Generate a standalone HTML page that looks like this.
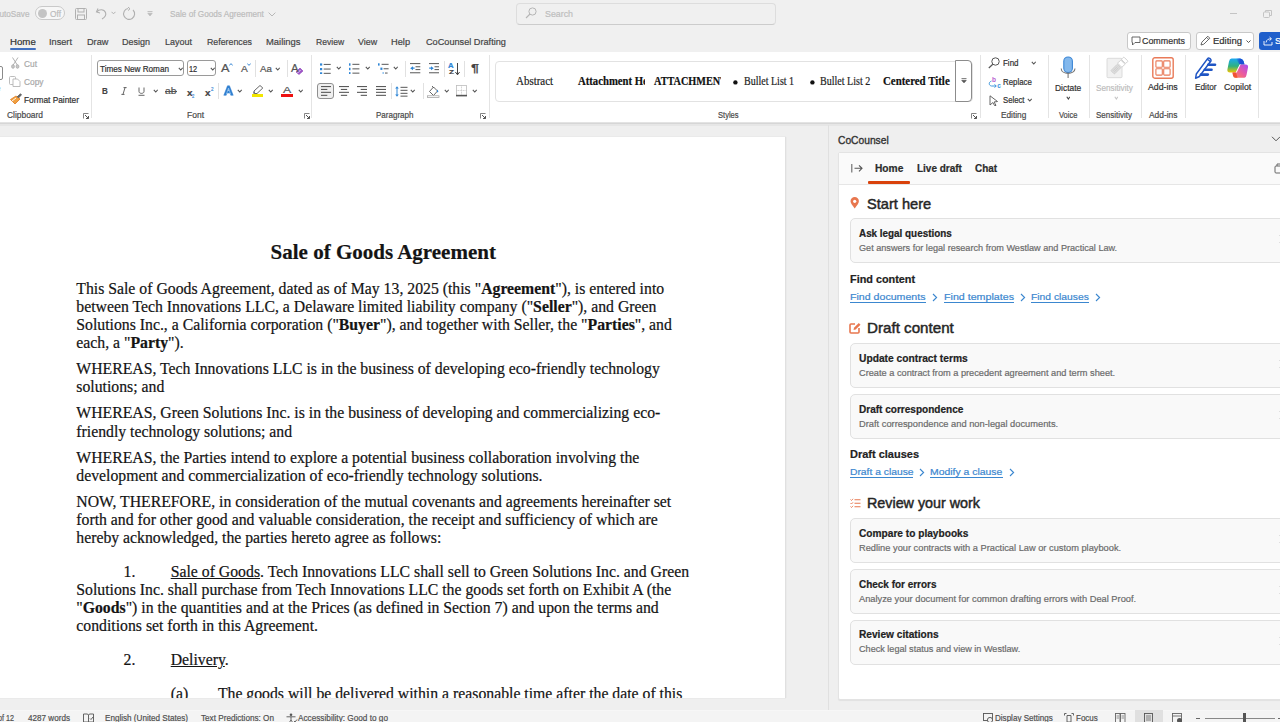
<!DOCTYPE html>
<html><head><meta charset="utf-8">
<style>
*{box-sizing:border-box;margin:0;padding:0}
html,body{width:1280px;height:722px;overflow:hidden}
body{position:relative;background:#efefef;font-family:"Liberation Sans",sans-serif;color:#222}
.a{position:absolute;white-space:nowrap;line-height:0;transform-origin:0 0}
svg.a{line-height:normal}
.a{-webkit-text-stroke:0.2px currentColor}
</style></head><body>
<div class="a" style="left:0px;top:0px;width:1280px;height:52px;background:#f0f0f0"></div>
<div class="a" style="left:35px;top:6px;width:30px;height:14px;border:1px solid #c9c9c9;border-radius:7px;background:#f7f7f7"></div>
<div class="a" style="left:37.5px;top:8.5px;width:9px;height:9px;border-radius:50%;background:#c4c4c4"></div>
<svg class="a" style="left:75px;top:8px" width="12" height="12" viewBox="0 0 12 12"><rect x="0.5" y="0.5" width="11" height="11" rx="1" fill="none" stroke="#b0b0b0"/><rect x="3" y="0.5" width="6" height="3.5" fill="none" stroke="#b0b0b0"/><rect x="2.5" y="7" width="7" height="4.5" fill="none" stroke="#b0b0b0"/></svg>
<svg class="a" style="left:95px;top:7px" width="13" height="13" viewBox="0 0 13 13"><path d="M3 1.5 L1.5 5 L5 6" fill="none" stroke="#b0b0b0" stroke-width="1.1"/><path d="M1.8 5 C4 2 9 2 10.5 5.5 C11.5 8 9.5 10.5 7 12" fill="none" stroke="#b0b0b0" stroke-width="1.1"/></svg>
<svg class="a" style="left:111px;top:11px" width="5" height="4" viewBox="0 0 5 4"><path d="M0.5 0.8 L2.5 2.8 L4.5 0.8" fill="none" stroke="#b0b0b0"/></svg>
<svg class="a" style="left:122px;top:7px" width="14" height="14" viewBox="0 0 14 14"><path d="M11 3 A5.5 5.5 0 1 1 6 1.5" fill="none" stroke="#b0b0b0" stroke-width="1.1"/><path d="M6 0 L8 1.8 L6 3.6" fill="none" stroke="#b0b0b0"/></svg>
<svg class="a" style="left:147px;top:11px" width="6" height="6" viewBox="0 0 6 6"><path d="M0.5 0.6 H5.5" stroke="#b8b8b8" stroke-width="0.9"/><path d="M0.8 2.3 H5.2 L3 5 Z" fill="#bbb" stroke="#b8b8b8" stroke-width="0.6"/></svg>
<svg class="a" style="left:267.5px;top:11.5px" width="8" height="5" viewBox="0 0 8 5"><path d="M0.6 0.6 L4 4 L7.4 0.6" fill="none" stroke="#b8b8b8" stroke-width="1"/></svg>
<div class="a" style="left:516px;top:2.5px;width:260px;height:22px;border:1px solid #dddddd;border-bottom-color:#cccccc;border-radius:4px;background:#f0f0f0"></div>
<svg class="a" style="left:525px;top:7px" width="12" height="12" viewBox="0 0 12 12"><circle cx="7.5" cy="4.5" r="3.6" fill="none" stroke="#b5b5b5" stroke-width="1"/><path d="M5 7 L1 11" stroke="#b5b5b5" stroke-width="1.1"/></svg>
<div class="a" style="left:1230px;top:13px;width:7px;height:1px;background:#c4c4c4"></div>
<svg class="a" style="left:1263px;top:10px" width="9" height="8" viewBox="0 0 9 8"><rect x="0.5" y="2" width="6" height="5.5" rx="1" fill="none" stroke="#c4c4c4"/><path d="M2.5 2 V0.5 H8.5 V5.5 H6.5" fill="none" stroke="#c4c4c4"/></svg>
<div class="a" style="left:9.5px;top:48px;width:26.5px;height:2px;background:#4170c0;border-radius:1px"></div>
<div class="a" style="left:1127px;top:32px;width:64px;height:18px;border:1px solid #c8c8c8;border-radius:3px;background:#fff"></div>
<svg class="a" style="left:1131px;top:36px" width="10" height="10" viewBox="0 0 10 10"><path d="M1 1 H9 V6.5 H4 L1.5 9 V6.5 H1 Z" fill="none" stroke="#555" stroke-width="0.9"/></svg>
<div class="a" style="left:1196px;top:32px;width:58px;height:18px;border:1px solid #c8c8c8;border-radius:3px;background:#fff"></div>
<svg class="a" style="left:1199px;top:35px" width="12" height="12" viewBox="0 0 12 12"><path d="M2 10 L2.8 7.2 L8.8 1.2 L10.8 3.2 L4.8 9.2 Z M7.6 2.4 L9.6 4.4" fill="none" stroke="#555" stroke-width="0.9"/></svg>
<svg class="a" style="left:1246px;top:40px" width="5" height="3" viewBox="0 0 5 3"><path d="M0.5 0.5 L2.5 2.5 L4.5 0.5" fill="none" stroke="#555"/></svg>
<div class="a" style="left:1259px;top:32px;width:30px;height:18px;background:#1f5fcb;border-radius:3px"></div>
<svg class="a" style="left:1263px;top:36px" width="10" height="10" viewBox="0 0 10 10"><path d="M1 5 V9 H9 V6" fill="none" stroke="#fff" stroke-width="0.9"/><path d="M3 6.5 C3.5 3.5 5.5 2.8 8 2.8 M6.5 1 L8.5 2.8 L6.5 4.6" fill="none" stroke="#fff" stroke-width="0.9"/></svg>
<div class="a" style="left:0px;top:52px;width:1280px;height:69.5px;background:#fff"></div>
<div class="a" style="left:0px;top:121.5px;width:1280px;height:1px;background:#e3e3e3"></div>
<div class="a" style="left:0px;top:122.5px;width:1280px;height:1.5px;background:#d6d6d6"></div>
<div class="a" style="left:0px;top:124px;width:1280px;height:1.5px;background:#e6e6e6"></div>
<div class="a" style="left:91px;top:55px;width:1px;height:63px;background:#e4e4e4"></div>
<div class="a" style="left:311px;top:55px;width:1px;height:63px;background:#e4e4e4"></div>
<div class="a" style="left:488.6px;top:55px;width:1px;height:63px;background:#e4e4e4"></div>
<div class="a" style="left:979.5px;top:55px;width:1px;height:63px;background:#e4e4e4"></div>
<div class="a" style="left:1047.5px;top:55px;width:1px;height:63px;background:#e4e4e4"></div>
<div class="a" style="left:1088.5px;top:55px;width:1px;height:63px;background:#e4e4e4"></div>
<div class="a" style="left:1140.5px;top:55px;width:1px;height:63px;background:#e4e4e4"></div>
<div class="a" style="left:1185px;top:55px;width:1px;height:63px;background:#e4e4e4"></div>
<div class="a" style="left:1258px;top:55px;width:1px;height:63px;background:#e4e4e4"></div>
<div class="a" style="left:-8px;top:66px;width:11px;height:14px;border:1px solid #8a8a8a;border-radius:2px;background:#fff"></div>
<svg class="a" style="left:11px;top:57px" width="9" height="12" viewBox="0 0 9 12"><path d="M1.5 0.5 L6.3 8 M7 0.5 L2.2 8" stroke="#a8a8a8" stroke-width="0.9" fill="none"/><ellipse cx="2" cy="9.5" rx="1.4" ry="1.8" fill="#c8c8c8" stroke="#a8a8a8" stroke-width="0.8"/><ellipse cx="6.5" cy="9.5" rx="1.4" ry="1.8" fill="#c8c8c8" stroke="#a8a8a8" stroke-width="0.8"/></svg>
<svg class="a" style="left:9px;top:75.5px" width="12" height="11" viewBox="0 0 12 11"><rect x="0.5" y="0.5" width="6" height="8" rx="1" fill="none" stroke="#b5b5b5" stroke-width="0.9"/><path d="M4 3 H8.5 L11 5.5 V10.5 H4 Z" fill="#fff" stroke="#b5b5b5" stroke-width="0.9"/></svg>
<svg class="a" style="left:9.5px;top:93px" width="12" height="12" viewBox="0 0 12 12"><path d="M0.5 6.5 L5 11 L10 6 L6 3 Z" fill="#f0a040" stroke="#e07a20" stroke-width="0.8"/><path d="M2 8 L6 5" stroke="#fff" stroke-width="0.9"/><path d="M7 4 L10.5 0.8 L11.5 1.8 L8.5 5" fill="#666" stroke="#555" stroke-width="0.8"/></svg>
<svg class="a" style="left:82.5px;top:112.5px" width="6" height="6" viewBox="0 0 6 6"><path d="M0.5 5.5 V0.5 H5.5" fill="none" stroke="#777" stroke-width="0.9"/><path d="M2 2 L5.5 5.5 M3 5.5 H5.5 V3" fill="none" stroke="#555" stroke-width="1"/></svg>
<div class="a" style="left:96.8px;top:60.2px;width:87.7px;height:16.3px;border:1px solid #9a9a9a;border-radius:3px;background:#fff"></div>
<svg class="a" style="left:177.5px;top:66.5px" width="5.5" height="4" viewBox="0 0 5.5 4"><path d="M0.8 0.8 L2.75 3 L4.7 0.8" fill="none" stroke="#555" stroke-width="1.1"/></svg>
<div class="a" style="left:186.6px;top:60.4px;width:29.4px;height:16.1px;border:1px solid #9a9a9a;border-radius:3px;background:#fff"></div>
<svg class="a" style="left:209.7px;top:66.5px" width="5.5" height="4" viewBox="0 0 5.5 4"><path d="M0.8 0.8 L2.75 3 L4.7 0.8" fill="none" stroke="#555" stroke-width="1.1"/></svg>
<svg class="a" style="left:229px;top:63px" width="4" height="3" viewBox="0 0 4 3"><path d="M0.3 2.5 L2 0.6 L3.7 2.5" fill="none" stroke="#3c8ad6" stroke-width="1"/></svg>
<svg class="a" style="left:247px;top:62.5px" width="4" height="3" viewBox="0 0 4 3"><path d="M0.3 0.5 L2 2.4 L3.7 0.5" fill="none" stroke="#3c8ad6" stroke-width="1"/></svg>
<div class="a" style="left:255px;top:60px;width:1px;height:16.5px;background:#e1e1e1"></div>
<svg class="a" style="left:274.7px;top:66.5px" width="5.5" height="4" viewBox="0 0 5.5 4"><path d="M0.8 0.8 L2.75 3 L4.7 0.8" fill="none" stroke="#555" stroke-width="1.1"/></svg>
<div class="a" style="left:287px;top:60px;width:1px;height:16.5px;background:#e1e1e1"></div>
<svg class="a" style="left:295px;top:66.5px" width="9" height="8" viewBox="0 0 9 8"><path d="M1 5 L5 1 L8 4 L4 7.5 Z" fill="#a057c9" stroke="#8a3fb5" stroke-width="0.6"/><path d="M2.5 6 L5.5 3" stroke="#fff" stroke-width="0.8"/></svg>
<svg class="a" style="left:120.5px;top:87px" width="6" height="8" viewBox="0 0 6 8"><path d="M2.5 0.6 H5.6 M0.4 7.4 H3.5 M4 0.6 L2 7.4" fill="none" stroke="#555" stroke-width="0.9"/></svg>
<svg class="a" style="left:138px;top:87px" width="7" height="9" viewBox="0 0 7 9"><path d="M1 0.5 V4.5 C1 7 6 7 6 4.5 V0.5" fill="none" stroke="#555" stroke-width="0.9"/><path d="M0.5 8.3 H6.5" stroke="#555" stroke-width="0.9"/></svg>
<svg class="a" style="left:152.5px;top:89.3px" width="5.5" height="4" viewBox="0 0 5.5 4"><path d="M0.8 0.8 L2.75 3 L4.7 0.8" fill="none" stroke="#555" stroke-width="1.1"/></svg>
<div class="a" style="left:164.5px;top:91.3px;width:12.5px;height:1px;background:#555"></div>
<div class="a" style="left:217.5px;top:83px;width:1px;height:16px;background:#e1e1e1"></div>
<svg class="a" style="left:222.5px;top:85px" width="11" height="11" viewBox="0 0 11 11"><path d="M0.8 10.3 L4.5 0.8 H6.5 L10.2 10.3 H7.8 L7 8 H4 L3.2 10.3 Z M4.6 6 H6.4 L5.5 3.2 Z" fill="#2f7fd0" stroke="#2f7fd0" stroke-width="0.5" stroke-linejoin="round"/><path d="M3.4 9.3 L5.5 3 L7.6 9.3" fill="none" stroke="#9ecbf3" stroke-width="0.7"/></svg>
<svg class="a" style="left:237.1px;top:89.3px" width="5.5" height="4" viewBox="0 0 5.5 4"><path d="M0.8 0.8 L2.75 3 L4.7 0.8" fill="none" stroke="#555" stroke-width="1.1"/></svg>
<svg class="a" style="left:252px;top:84.5px" width="12" height="9" viewBox="0 0 12 9"><path d="M2.5 8.5 L2 6 L8 0.5 L10.8 3 L5 8.5 Z" fill="#fff" stroke="#555" stroke-width="0.9"/><path d="M2.5 8.5 L1 8.5 L2 6" fill="#555"/></svg>
<div class="a" style="left:251.5px;top:94px;width:11.7px;height:2.6px;background:#f2e600"></div>
<svg class="a" style="left:268.1px;top:89.3px" width="5.5" height="4" viewBox="0 0 5.5 4"><path d="M0.8 0.8 L2.75 3 L4.7 0.8" fill="none" stroke="#555" stroke-width="1.1"/></svg>
<div class="a" style="left:281px;top:94px;width:11.6px;height:2.6px;background:#ee1111"></div>
<svg class="a" style="left:297.5px;top:89.3px" width="5.5" height="4" viewBox="0 0 5.5 4"><path d="M0.8 0.8 L2.75 3 L4.7 0.8" fill="none" stroke="#555" stroke-width="1.1"/></svg>
<svg class="a" style="left:304px;top:112.5px" width="6" height="6" viewBox="0 0 6 6"><path d="M0.5 5.5 V0.5 H5.5" fill="none" stroke="#777" stroke-width="0.9"/><path d="M2 2 L5.5 5.5 M3 5.5 H5.5 V3" fill="none" stroke="#555" stroke-width="1"/></svg>
<svg class="a" style="left:320px;top:62.5px" width="11.5" height="11" viewBox="0 0 11.5 11"><rect x="0" y="0.4" width="2.2" height="2.2" fill="#2f86d6"/><rect x="3.7" y="0.9" width="7" height="1.1" fill="#666"/><rect x="0" y="5" width="2.2" height="2.2" fill="#2f86d6"/><rect x="3.7" y="5.5" width="7" height="1.1" fill="#666"/><rect x="0" y="9.3" width="2.2" height="2.2" fill="#2f86d6"/><rect x="3.7" y="9.8" width="7" height="1.1" fill="#666"/></svg>
<svg class="a" style="left:336.1px;top:65.7px" width="5.5" height="4" viewBox="0 0 5.5 4"><path d="M0.8 0.8 L2.75 3 L4.7 0.8" fill="none" stroke="#555" stroke-width="1.1"/></svg>
<svg class="a" style="left:349px;top:62.5px" width="11" height="11" viewBox="0 0 11 11"><rect x="0" y="0.3" width="1.5" height="2.4" fill="#2f86d6"/><rect x="3.4" y="0.8" width="7" height="1.1" fill="#666"/><rect x="0" y="4.8" width="1.5" height="2.4" fill="#2f86d6"/><rect x="3.4" y="5.3" width="7" height="1.1" fill="#666"/><rect x="0" y="9.1" width="1.5" height="2.4" fill="#2f86d6"/><rect x="3.4" y="9.6" width="7" height="1.1" fill="#666"/></svg>
<svg class="a" style="left:365.1px;top:65.7px" width="5.5" height="4" viewBox="0 0 5.5 4"><path d="M0.8 0.8 L2.75 3 L4.7 0.8" fill="none" stroke="#555" stroke-width="1.1"/></svg>
<svg class="a" style="left:377.5px;top:62.5px" width="11" height="11" viewBox="0 0 11 11"><rect x="0" y="0.3" width="1.6" height="2.3" fill="#2f86d6"/><rect x="3.6" y="0.8" width="7" height="1.1" fill="#666"/><rect x="2.4" y="4.6" width="2" height="2.3" fill="#2f86d6"/><rect x="5.6" y="5.2" width="5" height="1.1" fill="#666"/><rect x="4.4" y="9" width="1.6" height="2" fill="#9cc8f0"/><rect x="7" y="9.5" width="2.6" height="1.1" fill="#666"/></svg>
<svg class="a" style="left:392.5px;top:65.7px" width="5.5" height="4" viewBox="0 0 5.5 4"><path d="M0.8 0.8 L2.75 3 L4.7 0.8" fill="none" stroke="#555" stroke-width="1.1"/></svg>
<div class="a" style="left:405px;top:60.5px;width:1px;height:16.299999999999997px;background:#e1e1e1"></div>
<svg class="a" style="left:410px;top:63px" width="10.5" height="10.5" viewBox="0 0 10.5 10.5"><rect x="0" y="0" width="10.3" height="1.1" fill="#666"/><rect x="5.5" y="3.2" width="4.8" height="1.1" fill="#666"/><rect x="5.5" y="6" width="4.8" height="1.1" fill="#666"/><rect x="0" y="9.2" width="10.3" height="1.1" fill="#666"/><path d="M0.2 5.2 L3 3.2 V4.6 H4.6 V5.8 H3 V7.2 Z" fill="#2f86d6"/></svg>
<svg class="a" style="left:428.5px;top:63px" width="10.5" height="10.5" viewBox="0 0 10.5 10.5"><rect x="0" y="0" width="10.3" height="1.1" fill="#666"/><rect x="5.5" y="3.2" width="4.8" height="1.1" fill="#666"/><rect x="5.5" y="6" width="4.8" height="1.1" fill="#666"/><rect x="0" y="9.2" width="10.3" height="1.1" fill="#666"/><path d="M4.8 5.2 L2 3.2 V4.6 H0.2 V5.8 H2 V7.2 Z" fill="#2f86d6"/></svg>
<div class="a" style="left:443.6px;top:60.5px;width:1px;height:16.299999999999997px;background:#e1e1e1"></div>
<svg class="a" style="left:455px;top:62.5px" width="5" height="12.5" viewBox="0 0 5 12.5"><path d="M2.5 0 V11.5 M0.4 9 L2.5 11.8 L4.6 9" fill="none" stroke="#444" stroke-width="1"/></svg>
<div class="a" style="left:464px;top:60.5px;width:1px;height:16.299999999999997px;background:#e1e1e1"></div>
<div class="a" style="left:317.3px;top:83px;width:16.5px;height:16.3px;border:1px solid #8f8f8f;border-radius:3px;background:#f0f0f0"></div>
<svg class="a" style="left:320.6px;top:86px" width="10.5" height="10.5" viewBox="0 0 10.5 10.5"><rect x="0" y="0" width="10" height="1.1" fill="#5a5a5a"/><rect x="0" y="2.9" width="6.3" height="1.1" fill="#5a5a5a"/><rect x="0" y="5.8" width="10" height="1.1" fill="#5a5a5a"/><rect x="0" y="8.8" width="6.3" height="1.1" fill="#5a5a5a"/></svg>
<svg class="a" style="left:338.9px;top:86px" width="10.5" height="10.5" viewBox="0 0 10.5 10.5"><rect x="0.0" y="0" width="10" height="1.1" fill="#5a5a5a"/><rect x="1.85" y="2.9" width="6.3" height="1.1" fill="#5a5a5a"/><rect x="0.0" y="5.8" width="10" height="1.1" fill="#5a5a5a"/><rect x="1.85" y="8.8" width="6.3" height="1.1" fill="#5a5a5a"/></svg>
<svg class="a" style="left:357px;top:86px" width="10.5" height="10.5" viewBox="0 0 10.5 10.5"><rect x="0" y="0" width="10" height="1.1" fill="#5a5a5a"/><rect x="3.7" y="2.9" width="6.3" height="1.1" fill="#5a5a5a"/><rect x="0" y="5.8" width="10" height="1.1" fill="#5a5a5a"/><rect x="3.7" y="8.8" width="6.3" height="1.1" fill="#5a5a5a"/></svg>
<svg class="a" style="left:375.7px;top:86px" width="10.5" height="10.5" viewBox="0 0 10.5 10.5"><rect x="0" y="0" width="10" height="1.1" fill="#5a5a5a"/><rect x="0" y="2.9" width="10" height="1.1" fill="#5a5a5a"/><rect x="0" y="5.8" width="10" height="1.1" fill="#5a5a5a"/><rect x="0" y="8.8" width="10" height="1.1" fill="#5a5a5a"/></svg>
<div class="a" style="left:390.6px;top:83px;width:1px;height:16px;background:#e1e1e1"></div>
<svg class="a" style="left:394.5px;top:85.5px" width="13" height="11" viewBox="0 0 13 11"><path d="M2 0.2 L3.8 2.4 H0.2 Z M2 10.8 L3.8 8.6 H0.2 Z" fill="#2f86d6"/><rect x="1.5" y="2" width="1" height="7" fill="#2f86d6"/><rect x="5.5" y="0.8" width="7" height="1.1" fill="#666"/><rect x="5.5" y="3.8" width="7" height="1.1" fill="#666"/><rect x="5.5" y="6.8" width="7" height="1.1" fill="#666"/><rect x="5.5" y="9.6" width="7" height="1.1" fill="#666"/></svg>
<svg class="a" style="left:410.1px;top:89.3px" width="5.5" height="4" viewBox="0 0 5.5 4"><path d="M0.8 0.8 L2.75 3 L4.7 0.8" fill="none" stroke="#555" stroke-width="1.1"/></svg>
<div class="a" style="left:422.7px;top:83px;width:1px;height:16px;background:#e1e1e1"></div>
<svg class="a" style="left:427px;top:84.5px" width="13" height="13" viewBox="0 0 13 13"><path d="M2.5 6.5 L6.5 2 L10.5 6 L6.5 10.5 Z" fill="#fff" stroke="#555" stroke-width="0.9"/><path d="M5 1 L6.8 2.8" stroke="#555" stroke-width="0.9"/><path d="M10.3 4.5 C11.5 5.8 11.5 7 10.8 7.3 C10 7.5 9.6 6.5 10.3 4.5Z" fill="#2f86d6"/><rect x="0.5" y="10.8" width="11.5" height="1.7" fill="#fff" stroke="#9a9a9a" stroke-width="0.7"/></svg>
<svg class="a" style="left:443.5px;top:89.3px" width="5.5" height="4" viewBox="0 0 5.5 4"><path d="M0.8 0.8 L2.75 3 L4.7 0.8" fill="none" stroke="#555" stroke-width="1.1"/></svg>
<svg class="a" style="left:456px;top:85px" width="11" height="11.5" viewBox="0 0 11 11.5"><rect x="0.5" y="0.5" width="10" height="10" fill="none" stroke="#bdbdbd" stroke-width="0.8"/><path d="M5.5 0.5 V10.5 M0.5 5.5 H10.5" stroke="#bdbdbd" stroke-width="0.7" stroke-dasharray="1 0.6"/><rect x="0" y="9.8" width="11" height="1.6" fill="#555"/></svg>
<svg class="a" style="left:472.3px;top:89.3px" width="5.5" height="4" viewBox="0 0 5.5 4"><path d="M0.8 0.8 L2.75 3 L4.7 0.8" fill="none" stroke="#555" stroke-width="1.1"/></svg>
<svg class="a" style="left:480.3px;top:112.5px" width="6" height="6" viewBox="0 0 6 6"><path d="M0.5 5.5 V0.5 H5.5" fill="none" stroke="#777" stroke-width="0.9"/><path d="M2 2 L5.5 5.5 M3 5.5 H5.5 V3" fill="none" stroke="#555" stroke-width="1"/></svg>
<div class="a" style="left:495.3px;top:60.6px;width:478px;height:41.5px;border:1px solid #e2e2e2;border-radius:4px;background:#fff"></div>
<div class="a" style="left:955.3px;top:60.2px;width:17px;height:42.2px;border:1px solid #8c8c8c;border-radius:0 4px 4px 0;background:#fff"></div>
<svg class="a" style="left:960.5px;top:77.5px" width="6" height="6" viewBox="0 0 6 6"><path d="M0.5 0.6 H5.5 M0.8 2.4 L3 4.8 L5.2 2.4 Z" fill="#555" stroke="#555" stroke-width="0.8"/></svg>
<svg class="a" style="left:733px;top:79.8px" width="5" height="5" viewBox="0 0 5 5"><circle cx="2.4" cy="2.4" r="2.2" fill="#111"/></svg>
<svg class="a" style="left:809.7px;top:79.8px" width="5" height="5" viewBox="0 0 5 5"><circle cx="2.4" cy="2.4" r="2.2" fill="#111"/></svg>
<svg class="a" style="left:971.2px;top:112.5px" width="6" height="6" viewBox="0 0 6 6"><path d="M0.5 5.5 V0.5 H5.5" fill="none" stroke="#777" stroke-width="0.9"/><path d="M2 2 L5.5 5.5 M3 5.5 H5.5 V3" fill="none" stroke="#555" stroke-width="1"/></svg>
<svg class="a" style="left:988px;top:57px" width="12.5" height="11.5" viewBox="0 0 12.5 11.5"><circle cx="7.5" cy="4.5" r="3.7" fill="none" stroke="#555" stroke-width="1"/><path d="M4.8 7.2 L0.8 11" stroke="#555" stroke-width="1.2"/></svg>
<svg class="a" style="left:1030.5px;top:61.0px" width="5.5" height="4" viewBox="0 0 5.5 4"><path d="M0.8 0.8 L2.75 3 L4.7 0.8" fill="none" stroke="#555" stroke-width="1.1"/></svg>
<svg class="a" style="left:987.5px;top:75.5px" width="14" height="12.5" viewBox="0 0 14 12.5"><text x="4" y="5.5" font-size="6.5" font-family="Liberation Sans" font-weight="bold" fill="#b85fd0">b</text><path d="M3.5 5 C0.5 6 0.5 9.5 3.5 10 H8 M6.5 8.5 L8.3 10 L6.5 11.5" fill="none" stroke="#3d96dd" stroke-width="1"/><text x="9.2" y="11.8" font-size="6.5" font-family="Liberation Sans" font-weight="bold" fill="#3d96dd">c</text></svg>
<svg class="a" style="left:988.5px;top:94.5px" width="9.5" height="11" viewBox="0 0 9.5 11"><path d="M1 0.8 L8.5 6.5 L5 7 L7 10.3 L5.8 10.8 L3.8 7.6 L1 10 Z" fill="#fff" stroke="#555" stroke-width="0.9" stroke-linejoin="round"/></svg>
<svg class="a" style="left:1027.2px;top:98.0px" width="5.5" height="4" viewBox="0 0 5.5 4"><path d="M0.8 0.8 L2.75 3 L4.7 0.8" fill="none" stroke="#555" stroke-width="1.1"/></svg>
<svg class="a" style="left:1060px;top:56px" width="16" height="23" viewBox="0 0 16 23"><rect x="3.8" y="1" width="8.6" height="15.6" rx="4.3" fill="#83b8ec" stroke="#3b86d6" stroke-width="1.1"/><path d="M1.2 12.5 C1.2 19 15 19 15 12.5" fill="none" stroke="#777" stroke-width="1.1"/><path d="M8.1 17.7 V22" stroke="#777" stroke-width="1.1"/></svg>
<svg class="a" style="left:1065.5px;top:96.1px" width="4.7" height="4" viewBox="0 0 4.7 4"><path d="M0.8 0.8 L2.35 3 L3.9000000000000004 0.8" fill="none" stroke="#444" stroke-width="1.1"/></svg>
<svg class="a" style="left:1105px;top:56px" width="24" height="23" viewBox="0 0 24 23"><rect x="2" y="2.3" width="15" height="19.4" rx="1" fill="#f1f1f1" stroke="#d8d8d8" stroke-width="0.9"/><g transform="rotate(-45 14 10)"><rect x="5" y="7.5" width="9" height="5" rx="0.6" fill="#dcdcdc" stroke="#cdcdcd" stroke-width="0.8"/><path d="M6.5 9.2 H12.5 M6.5 10.8 H12.5" stroke="#c4c4c4" stroke-width="0.6"/><rect x="15" y="7" width="4.5" height="6" rx="0.8" fill="#fff" stroke="#cdcdcd" stroke-width="0.9"/><rect x="20.3" y="7" width="3.5" height="6" rx="0.8" fill="#fff" stroke="#cdcdcd" stroke-width="0.9"/></g></svg>
<svg class="a" style="left:1113.5px;top:96.1px" width="4.7" height="4" viewBox="0 0 4.7 4"><path d="M0.8 0.8 L2.35 3 L3.9000000000000004 0.8" fill="none" stroke="#c5c5c5" stroke-width="1.1"/></svg>
<svg class="a" style="left:1152px;top:57px" width="22" height="22" viewBox="0 0 22 22"><rect x="0.8" y="0.8" width="20.4" height="20.4" rx="2" fill="#fff" stroke="#e97a58" stroke-width="1.4"/><rect x="3.9" y="3.9" width="6.4" height="6.4" rx="0.8" fill="#fff" stroke="#e97a58" stroke-width="1.1"/><rect x="3.9" y="11.7" width="6.4" height="6.4" rx="0.8" fill="#fff" stroke="#e97a58" stroke-width="1.1"/><rect x="11.7" y="3.9" width="6.4" height="6.4" rx="0.8" fill="#fff" stroke="#e97a58" stroke-width="1.1"/><rect x="11.7" y="11.7" width="6.4" height="6.4" rx="0.8" fill="#fff" stroke="#e97a58" stroke-width="1.1"/></svg>
<svg class="a" style="left:1194px;top:56px" width="24" height="24" viewBox="0 0 24 24"><path d="M1.6 22.3 L2.3 18 L13.6 2.6 Q14.4 1.6 15.6 2.4 L16.6 3.2 Q17.5 4 16.8 5 L5.4 20.5 Z" fill="#fff" stroke="#1f55c4" stroke-width="1.5" stroke-linejoin="round"/><path d="M13.2 3.2 L17 6" stroke="#1f55c4" stroke-width="1.5"/><path d="M14.3 8.8 H21" stroke="#1f55c4" stroke-width="2.6" stroke-linecap="round"/><path d="M10.8 13.8 H17.5" stroke="#1f55c4" stroke-width="2.6" stroke-linecap="round"/><path d="M7 18.6 H13.8" stroke="#1f55c4" stroke-width="2.6" stroke-linecap="round"/></svg>
<svg class="a" style="left:1227px;top:57.5px" width="22" height="20.5" viewBox="0 0 22 20.5"><defs><linearGradient id="cg1" x1="0" y1="0" x2="0" y2="1"><stop offset="0" stop-color="#19a8f3"/><stop offset="0.55" stop-color="#2fb17f"/><stop offset="1" stop-color="#f1c500"/></linearGradient><linearGradient id="cg2" x1="1" y1="0" x2="0" y2="1"><stop offset="0" stop-color="#a64df5"/><stop offset="0.5" stop-color="#ea5aa0"/><stop offset="1" stop-color="#ff8a48"/></linearGradient><linearGradient id="cg3" x1="0" y1="0" x2="1" y2="0"><stop offset="0" stop-color="#1b4fd6" stop-opacity="0"/><stop offset="0.5" stop-color="#1b4fd6"/></linearGradient></defs><path d="M4.5 0.5 H13 Q15.5 0.5 16.5 3 L17.5 6.5 H13 L9 14.5 H3 Q0 14.5 0.4 11.5 L2 3.5 Q2.6 0.5 4.5 0.5 Z" fill="url(#cg1)"/><path d="M9 0.5 H13 Q15.5 0.5 16.5 3 L17.5 6.5 H12.5 Z" fill="url(#cg3)"/><path d="M17.5 19.8 H8.5 Q6.5 19.8 6 17.5 L5.5 14.5 H9 L13 6.5 H18.5 Q21.5 6.5 21 9.5 L19.5 17 Q19 19.8 17.5 19.8 Z" fill="url(#cg2)"/><path d="M5.5 14.5 H9 L10.5 19.8 H8.5 Q6.5 19.8 6 17.5 Z" fill="#f04b2a" opacity="0.85"/><path d="M13.2 6.3 L9.2 14.6" stroke="#fff" stroke-width="1"/></svg>
<div class="a" style="left:827.5px;top:125px;width:1px;height:585px;background:#e0e0e0"></div>
<svg class="a" style="left:1271px;top:136px" width="10" height="6" viewBox="0 0 10 6"><path d="M1 0.8 L5 4.8 L9 0.8" fill="none" stroke="#555" stroke-width="1"/></svg>
<div class="a" style="left:838px;top:152px;width:460px;height:548px;background:#fff;border:1px solid #e3e3e3;border-radius:2px;box-shadow:0 1px 1px rgba(0,0,0,0.06)"></div>
<div class="a" style="left:839px;top:153px;width:450px;height:31.5px;background:#fafafa;border-bottom:1px solid #e6e6e6"></div>
<svg class="a" style="left:850.5px;top:164px" width="12" height="9" viewBox="0 0 12 9"><path d="M0.8 0 V8.5" stroke="#666" stroke-width="1.1"/><path d="M3.5 4.3 H11 M8 1.3 L11 4.3 L8 7.3" fill="none" stroke="#555" stroke-width="1.1"/></svg>
<div class="a" style="left:868px;top:181px;width:42px;height:2.8px;background:#d9420b;border-radius:1px"></div>
<svg class="a" style="left:1274px;top:163px" width="9" height="11" viewBox="0 0 9 11"><rect x="1" y="3" width="8" height="7" rx="1" fill="none" stroke="#666" stroke-width="1"/><path d="M3 3 V1 H9" fill="none" stroke="#666" stroke-width="1"/></svg>
<svg class="a" style="left:849.5px;top:197px" width="9.5" height="12" viewBox="0 0 9.5 12"><path d="M4.7 11.5 C2.5 8.5 0.5 6.3 0.5 4.3 A4.2 4.2 0 0 1 8.9 4.3 C8.9 6.3 7 8.5 4.7 11.5 Z" fill="#e8774f"/><circle cx="4.7" cy="4.3" r="1.6" fill="#fff"/></svg>
<div class="a" style="left:849.7px;top:218.3px;width:450px;height:45px;background:#f9f9f9;border:1px solid #e1e1e1;border-radius:5px"></div>
<svg class="a" style="left:1279px;top:235.3px" width="5" height="9" viewBox="0 0 5 9"><path d="M0.8 0.8 L4 4 L0.8 7.2" fill="none" stroke="#777" stroke-width="1"/></svg>
<div class="a" style="left:850.4px;top:301.90000000000003px;width:75.5px;height:0.9px;background:#3b87cf"></div>
<svg class="a" style="left:932.0px;top:292.8px" width="6" height="9" viewBox="0 0 6 9"><path d="M1 1 L4.6 4.5 L1 8" fill="none" stroke="#3b87cf" stroke-width="1.1"/></svg>
<div class="a" style="left:943.6px;top:301.90000000000003px;width:70.0px;height:0.9px;background:#3b87cf"></div>
<svg class="a" style="left:1019.5px;top:292.8px" width="6" height="9" viewBox="0 0 6 9"><path d="M1 1 L4.6 4.5 L1 8" fill="none" stroke="#3b87cf" stroke-width="1.1"/></svg>
<div class="a" style="left:1030.8px;top:301.90000000000003px;width:57.90000000000009px;height:0.9px;background:#3b87cf"></div>
<svg class="a" style="left:1095.2px;top:292.8px" width="6" height="9" viewBox="0 0 6 9"><path d="M1 1 L4.6 4.5 L1 8" fill="none" stroke="#3b87cf" stroke-width="1.1"/></svg>
<svg class="a" style="left:849.4px;top:321.5px" width="12" height="12" viewBox="0 0 12 12"><path d="M6 2 H2 Q1 2 1 3 V10 Q1 11 2 11 H9 Q10 11 10 10 V6" fill="none" stroke="#e8774f" stroke-width="1.6"/><path d="M4.5 8 L5 5.8 L9.8 1 L11.5 2.7 L6.7 7.5 Z" fill="#e8774f"/></svg>
<div class="a" style="left:849.7px;top:343.2px;width:450px;height:45px;background:#f9f9f9;border:1px solid #e1e1e1;border-radius:5px"></div>
<svg class="a" style="left:1279px;top:360.2px" width="5" height="9" viewBox="0 0 5 9"><path d="M0.8 0.8 L4 4 L0.8 7.2" fill="none" stroke="#777" stroke-width="1"/></svg>
<div class="a" style="left:849.7px;top:394.4px;width:450px;height:45px;background:#f9f9f9;border:1px solid #e1e1e1;border-radius:5px"></div>
<svg class="a" style="left:1279px;top:411.4px" width="5" height="9" viewBox="0 0 5 9"><path d="M0.8 0.8 L4 4 L0.8 7.2" fill="none" stroke="#777" stroke-width="1"/></svg>
<div class="a" style="left:849.9px;top:477.20000000000005px;width:63.60000000000002px;height:0.9px;background:#3b87cf"></div>
<svg class="a" style="left:919.3px;top:468.1px" width="6" height="9" viewBox="0 0 6 9"><path d="M1 1 L4.6 4.5 L1 8" fill="none" stroke="#3b87cf" stroke-width="1.1"/></svg>
<div class="a" style="left:930.4px;top:477.20000000000005px;width:72.30000000000007px;height:0.9px;background:#3b87cf"></div>
<svg class="a" style="left:1008.5px;top:468.1px" width="6" height="9" viewBox="0 0 6 9"><path d="M1 1 L4.6 4.5 L1 8" fill="none" stroke="#3b87cf" stroke-width="1.1"/></svg>
<svg class="a" style="left:849.5px;top:497.5px" width="11" height="10" viewBox="0 0 11 10"><path d="M0.5 1.5 L1.5 2.5 L3 0.8 M0.5 5 L1.5 6 L3 4.3 M0.5 8.5 L1.5 9.5 L3 7.8" fill="none" stroke="#e8774f" stroke-width="0.9"/><path d="M4.5 1.7 H10.5 M4.5 5.2 H10.5 M4.5 8.7 H10.5" stroke="#e8774f" stroke-width="1.1"/></svg>
<div class="a" style="left:849.7px;top:518px;width:450px;height:45px;background:#f9f9f9;border:1px solid #e1e1e1;border-radius:5px"></div>
<svg class="a" style="left:1279px;top:535px" width="5" height="9" viewBox="0 0 5 9"><path d="M0.8 0.8 L4 4 L0.8 7.2" fill="none" stroke="#777" stroke-width="1"/></svg>
<div class="a" style="left:849.7px;top:569.2px;width:450px;height:45px;background:#f9f9f9;border:1px solid #e1e1e1;border-radius:5px"></div>
<svg class="a" style="left:1279px;top:586.2px" width="5" height="9" viewBox="0 0 5 9"><path d="M0.8 0.8 L4 4 L0.8 7.2" fill="none" stroke="#777" stroke-width="1"/></svg>
<div class="a" style="left:849.7px;top:619.8px;width:450px;height:45px;background:#f9f9f9;border:1px solid #e1e1e1;border-radius:5px"></div>
<svg class="a" style="left:1279px;top:636.8px" width="5" height="9" viewBox="0 0 5 9"><path d="M0.8 0.8 L4 4 L0.8 7.2" fill="none" stroke="#777" stroke-width="1"/></svg>
<div class="a" style="left:0px;top:710px;width:1280px;height:12px;background:#f4f4f4;border-top:1px solid #f7f7f7"></div>
<svg class="a" style="left:83px;top:713px" width="11" height="10" viewBox="0 0 11 10"><path d="M0.5 1 H4 Q5 1 5.5 2 Q6 1 7 1 H10.5 V9 H0.5 Z M5.5 2 V9" fill="none" stroke="#555" stroke-width="0.9"/><path d="M7 5.5 L8 6.5 L10 4" fill="none" stroke="#555" stroke-width="0.9"/></svg>
<svg class="a" style="left:286px;top:712.5px" width="12" height="10" viewBox="0 0 12 10"><circle cx="5" cy="1.8" r="1.3" fill="#555"/><path d="M0.5 3.8 H9.5 M5 3.8 V7 L3 10 M5 7 L7 10" fill="none" stroke="#555" stroke-width="0.9"/><path d="M8 8 L9 9 L11 6.5" fill="none" stroke="#555" stroke-width="0.9"/></svg>
<svg class="a" style="left:982.5px;top:712.5px" width="11" height="10" viewBox="0 0 11 10"><rect x="0.5" y="0.5" width="9" height="7" fill="none" stroke="#555" stroke-width="0.9"/><circle cx="7" cy="7" r="2.6" fill="#f3f3f3" stroke="#555" stroke-width="0.9"/></svg>
<svg class="a" style="left:1064px;top:712.5px" width="10" height="10" viewBox="0 0 10 10"><path d="M0.5 2.5 V0.5 H2.5 M7.5 0.5 H9.5 V2.5 M3 2.5 H7 V9 H3 Z" fill="none" stroke="#555" stroke-width="0.9"/></svg>
<svg class="a" style="left:1115px;top:712.5px" width="11" height="10" viewBox="0 0 11 10"><rect x="0.5" y="0.5" width="4.5" height="9" fill="none" stroke="#666" stroke-width="0.9"/><rect x="5.5" y="0.5" width="4.5" height="9" fill="none" stroke="#666" stroke-width="0.9"/><path d="M1.5 3 H4 M1.5 5 H4 M6.5 3 H9 M6.5 5 H9" stroke="#666" stroke-width="0.7"/></svg>
<div class="a" style="left:1134.7px;top:710px;width:28px;height:12px;background:#e0e0e0"></div>
<svg class="a" style="left:1144px;top:712.5px" width="9" height="10" viewBox="0 0 9 10"><rect x="0.5" y="0.5" width="8" height="9.5" fill="none" stroke="#555" stroke-width="0.9"/><path d="M2 3 H7 M2 5 H7 M2 7 H7" stroke="#555" stroke-width="0.7"/></svg>
<svg class="a" style="left:1172px;top:712.5px" width="11" height="10" viewBox="0 0 11 10"><rect x="0.5" y="0.5" width="9" height="9.5" fill="none" stroke="#666" stroke-width="0.9"/><path d="M0.5 3 H9.5" stroke="#666" stroke-width="0.9"/><circle cx="7.5" cy="7.5" r="2.5" fill="#555"/></svg>
<div class="a" style="left:1195.6px;top:717.5px;width:4.7px;height:1px;background:#666"></div>
<div class="a" style="left:1205px;top:717.6px;width:70px;height:0.9px;background:#888"></div>
<div class="a" style="left:1242.5px;top:713px;width:3.2px;height:9px;background:#555"></div>
<div class="a" style="left:1278px;top:717.5px;width:4px;height:1px;background:#666"></div>
<div class="a" style="left:0;top:137px;width:786px;height:561px;background:#fff;border-right:1px solid #e0e0e0;box-shadow:0 0 1px rgba(0,0,0,0.12);overflow:hidden;font-family:'Liberation Serif';color:#141414">
<div class="a" style="left:76.25px;top:152.12px;font-size:15.78px">This Sale of Goods Agreement, dated as of May 13, 2025 (this "<b>Agreement</b>"), is entered into</div>
<div class="a" style="left:76.25px;top:170.12px;font-size:15.78px">between Tech Innovations LLC, a Delaware limited liability company ("<b>Seller</b>"), and Green</div>
<div class="a" style="left:76.25px;top:188.12px;font-size:15.78px">Solutions Inc., a California corporation ("<b>Buyer</b>"), and together with Seller, the "<b>Parties</b>", and</div>
<div class="a" style="left:76.25px;top:206.12px;font-size:15.78px">each, a "<b>Party</b>").</div>
<div class="a" style="left:76.25px;top:232.17px;font-size:15.78px">WHEREAS, Tech Innovations LLC is in the business of developing eco-friendly technology</div>
<div class="a" style="left:76.25px;top:249.97px;font-size:15.78px">solutions; and</div>
<div class="a" style="left:76.25px;top:276.47px;font-size:15.78px">WHEREAS, Green Solutions Inc. is in the business of developing and commercializing eco-</div>
<div class="a" style="left:76.25px;top:294.67px;font-size:15.78px">friendly technology solutions; and</div>
<div class="a" style="left:76.25px;top:320.87px;font-size:15.78px">WHEREAS, the Parties intend to explore a potential business collaboration involving the</div>
<div class="a" style="left:76.25px;top:338.87px;font-size:15.78px">development and commercialization of eco-friendly technology solutions.</div>
<div class="a" style="left:76.25px;top:364.77px;font-size:15.78px">NOW, THEREFORE, in consideration of the mutual covenants and agreements hereinafter set</div>
<div class="a" style="left:76.25px;top:382.77px;font-size:15.78px">forth and for other good and valuable consideration, the receipt and sufficiency of which are</div>
<div class="a" style="left:76.25px;top:400.57px;font-size:15.78px">hereby acknowledged, the parties hereto agree as follows:</div>
<div class="a" style="left:123.60px;top:434.77px;font-size:15.78px">1.</div>
<div class="a" style="left:170.70px;top:434.77px;font-size:15.78px"><u>Sale of Goods</u>. Tech Innovations LLC shall sell to Green Solutions Inc. and Green</div>
<div class="a" style="left:76.25px;top:452.87px;font-size:15.78px">Solutions Inc. shall purchase from Tech Innovations LLC the goods set forth on Exhibit A (the</div>
<div class="a" style="left:76.25px;top:470.67px;font-size:15.78px">"<b>Goods</b>") in the quantities and at the Prices (as defined in Section 7) and upon the terms and</div>
<div class="a" style="left:76.25px;top:488.57px;font-size:15.78px">conditions set forth in this Agreement.</div>
<div class="a" style="left:123.60px;top:523.37px;font-size:15.78px">2.</div>
<div class="a" style="left:170.70px;top:523.37px;font-size:15.78px"><u>Delivery</u>.</div>
<div class="a" style="left:170.70px;top:557.37px;font-size:15.78px">(a)</div>
<div class="a" style="left:217.90px;top:557.37px;font-size:15.78px">The goods will be delivered within a reasonable time after the date of this</div>
<div class="a" style="left:0;width:766.5px;text-align:center;top:114.71px;font-size:21px;font-weight:bold">Sale of Goods Agreement</div>
</div>
<div class="a" style="left:-6.50px;top:13.92px;font-size:8.3px;color:#bcbcbc;font-family:'Liberation Sans';font-weight:normal;transform:scaleX(0.9863);">AutoSave</div>
<div class="a" style="left:50.00px;top:13.92px;font-size:8.3px;color:#bcbcbc;font-family:'Liberation Sans';font-weight:normal;transform:scaleX(1.0075);">Off</div>
<div class="a" style="left:170.00px;top:14.02px;font-size:8.6px;color:#bcbcbc;font-family:'Liberation Sans';font-weight:normal;transform:scaleX(0.9539);">Sale of Goods Agreement</div>
<div class="a" style="left:545.00px;top:14.02px;font-size:8.6px;color:#bebebe;font-family:'Liberation Sans';font-weight:normal;transform:scaleX(1.0276);">Search</div>
<div class="a" style="left:9.50px;top:42.04px;font-size:9.7px;color:#303030;font-family:'Liberation Sans';font-weight:normal;transform:scaleX(0.9971);">Home</div>
<div class="a" style="left:49.00px;top:42.04px;font-size:9.7px;color:#444;font-family:'Liberation Sans';font-weight:normal;transform:scaleX(0.9481);">Insert</div>
<div class="a" style="left:86.60px;top:42.04px;font-size:9.7px;color:#444;font-family:'Liberation Sans';font-weight:normal;transform:scaleX(0.9454);">Draw</div>
<div class="a" style="left:122.00px;top:42.04px;font-size:9.7px;color:#444;font-family:'Liberation Sans';font-weight:normal;transform:scaleX(0.9273);">Design</div>
<div class="a" style="left:165.00px;top:42.04px;font-size:9.7px;color:#444;font-family:'Liberation Sans';font-weight:normal;transform:scaleX(0.9271);">Layout</div>
<div class="a" style="left:207.00px;top:42.04px;font-size:9.7px;color:#444;font-family:'Liberation Sans';font-weight:normal;transform:scaleX(0.9072);">References</div>
<div class="a" style="left:266.00px;top:42.04px;font-size:9.7px;color:#444;font-family:'Liberation Sans';font-weight:normal;transform:scaleX(0.9725);">Mailings</div>
<div class="a" style="left:315.60px;top:42.04px;font-size:9.7px;color:#444;font-family:'Liberation Sans';font-weight:normal;transform:scaleX(0.8851);">Review</div>
<div class="a" style="left:357.80px;top:42.04px;font-size:9.7px;color:#444;font-family:'Liberation Sans';font-weight:normal;transform:scaleX(0.9209);">View</div>
<div class="a" style="left:391.25px;top:42.04px;font-size:9.7px;color:#444;font-family:'Liberation Sans';font-weight:normal;transform:scaleX(0.9549);">Help</div>
<div class="a" style="left:426.00px;top:42.04px;font-size:9.7px;color:#444;font-family:'Liberation Sans';font-weight:normal;transform:scaleX(0.9451);">CoCounsel Drafting</div>
<div class="a" style="left:1142.00px;top:41.38px;font-size:9px;color:#333;font-family:'Liberation Sans';font-weight:normal;transform:scaleX(0.9883);">Comments</div>
<div class="a" style="left:1213.00px;top:41.38px;font-size:9px;color:#333;font-family:'Liberation Sans';font-weight:normal;transform:scaleX(1.0538);">Editing</div>
<div class="a" style="left:1275.00px;top:41.38px;font-size:9px;color:#fff;font-family:'Liberation Sans';font-weight:normal;">Share</div>
<div class="a" style="left:-4.50px;top:87.95px;font-size:8.8px;color:#666;font-family:'Liberation Sans';font-weight:normal;">e</div>
<div class="a" style="left:24.00px;top:63.55px;font-size:8.5px;color:#a9a9a9;font-family:'Liberation Sans';font-weight:normal;transform:scaleX(0.9828);">Cut</div>
<div class="a" style="left:24.00px;top:81.55px;font-size:8.5px;color:#a9a9a9;font-family:'Liberation Sans';font-weight:normal;transform:scaleX(0.9827);">Copy</div>
<div class="a" style="left:24.00px;top:100.05px;font-size:8.8px;color:#303030;font-family:'Liberation Sans';font-weight:normal;transform:scaleX(0.9451);">Format Painter</div>
<div class="a" style="left:7.00px;top:114.95px;font-size:8.5px;color:#4a4a4a;font-family:'Liberation Sans';font-weight:normal;transform:scaleX(0.9895);">Clipboard</div>
<div class="a" style="left:99.70px;top:69.15px;font-size:8.8px;color:#303030;font-family:'Liberation Sans';font-weight:normal;transform:scaleX(0.9263);">Times New Roman</div>
<div class="a" style="left:189.00px;top:69.15px;font-size:8.8px;color:#303030;font-family:'Liberation Sans';font-weight:normal;transform:scaleX(0.8377);">12</div>
<div class="a" style="left:221.20px;top:67.92px;font-size:11.2px;color:#555;font-family:'Liberation Sans';font-weight:normal;transform:scaleX(1.1378);">A</div>
<div class="a" style="left:240.60px;top:68.68px;font-size:9px;color:#555;font-family:'Liberation Sans';font-weight:normal;transform:scaleX(1.1328);">A</div>
<div class="a" style="left:259.60px;top:68.78px;font-size:9.3px;color:#555;font-family:'Liberation Sans';font-weight:normal;transform:scaleX(1.0461);">Aa</div>
<div class="a" style="left:290.50px;top:68.19px;font-size:11px;color:#555;font-family:'Liberation Sans';font-weight:normal;transform:scaleX(1.0222);">A</div>
<div class="a" style="left:102.40px;top:91.08px;font-size:9.3px;color:#444;font-family:'Liberation Sans';font-weight:bold;transform:scaleX(0.8636);">B</div>
<div class="a" style="left:165.00px;top:91.45px;font-size:8.8px;color:#555;font-family:'Liberation Sans';font-weight:normal;transform:scaleX(1.1544);">ab</div>
<div class="a" style="left:186.80px;top:92.78px;font-size:9.3px;color:#444;font-family:'Liberation Sans';font-weight:bold;transform:scaleX(1.0634);">x</div>
<div class="a" style="left:192.30px;top:96.40px;font-size:5.2px;color:#3c8ad6;font-family:'Liberation Sans';font-weight:normal;transform:scaleX(0.7953);">2</div>
<div class="a" style="left:204.80px;top:92.78px;font-size:9.3px;color:#444;font-family:'Liberation Sans';font-weight:bold;transform:scaleX(1.0634);">x</div>
<div class="a" style="left:210.50px;top:89.20px;font-size:5.2px;color:#3c8ad6;font-family:'Liberation Sans';font-weight:normal;transform:scaleX(0.8645);">2</div>
<div class="a" style="left:282.60px;top:89.87px;font-size:9.6px;color:#555;font-family:'Liberation Sans';font-weight:normal;transform:scaleX(1.2806);">A</div>
<div class="a" style="left:187.00px;top:115.05px;font-size:8.5px;color:#4a4a4a;font-family:'Liberation Sans';font-weight:normal;transform:scaleX(0.9995);">Font</div>
<div class="a" style="left:448.20px;top:65.91px;font-size:6.6px;color:#2f86d6;font-family:'Liberation Sans';font-weight:bold;transform:scaleX(1.1749);">A</div>
<div class="a" style="left:448.80px;top:72.45px;font-size:6.2px;color:#444;font-family:'Liberation Sans';font-weight:bold;transform:scaleX(1.3202);">Z</div>
<div class="a" style="left:470.50px;top:67.99px;font-size:11px;color:#444;font-family:'Liberation Sans';font-weight:bold;transform:scaleX(1.3077);">¶</div>
<div class="a" style="left:376.00px;top:115.05px;font-size:8.5px;color:#4a4a4a;font-family:'Liberation Sans';font-weight:normal;transform:scaleX(0.9447);">Paragraph</div>
<div class="a" style="left:516.30px;top:80.95px;font-size:12px;color:#1e1e1e;font-family:'Liberation Serif';font-weight:normal;transform:scaleX(0.9126);">Abstract</div>
<div class="a" style="left:570.00px;top:65.00px;width:75.00px;height:26px;overflow:hidden"><div class="a" style="left:7.80px;top:15.95px;font-size:12px;color:#111;font-family:'Liberation Serif';font-weight:bold;transform:scaleX(0.8920);">Attachment Heading</div></div>
<div class="a" style="left:650.00px;top:65.00px;width:71.00px;height:26px;overflow:hidden"><div class="a" style="left:4.20px;top:15.95px;font-size:12px;color:#111;font-family:'Liberation Serif';font-weight:bold;transform:scaleX(0.8536);">ATTACHMENT</div></div>
<div class="a" style="left:744.00px;top:80.95px;font-size:12px;color:#1e1e1e;font-family:'Liberation Serif';font-weight:normal;transform:scaleX(0.8350);">Bullet List 1</div>
<div class="a" style="left:820.40px;top:80.95px;font-size:12px;color:#1e1e1e;font-family:'Liberation Serif';font-weight:normal;transform:scaleX(0.8383);">Bullet List 2</div>
<div class="a" style="left:882.90px;top:80.95px;font-size:12px;color:#111;font-family:'Liberation Serif';font-weight:bold;transform:scaleX(0.9056);">Centered Title</div>
<div class="a" style="left:718.40px;top:115.05px;font-size:8.5px;color:#4a4a4a;font-family:'Liberation Sans';font-weight:normal;transform:scaleX(0.8900);">Styles</div>
<div class="a" style="left:1002.80px;top:63.25px;font-size:8.8px;color:#303030;font-family:'Liberation Sans';font-weight:normal;transform:scaleX(0.9054);">Find</div>
<div class="a" style="left:1002.80px;top:81.70px;font-size:8.8px;color:#303030;font-family:'Liberation Sans';font-weight:normal;transform:scaleX(0.8920);">Replace</div>
<div class="a" style="left:1002.80px;top:100.15px;font-size:8.8px;color:#303030;font-family:'Liberation Sans';font-weight:normal;transform:scaleX(0.8791);">Select</div>
<div class="a" style="left:1000.90px;top:114.95px;font-size:8.5px;color:#4a4a4a;font-family:'Liberation Sans';font-weight:normal;transform:scaleX(0.9735);">Editing</div>
<div class="a" style="left:1054.70px;top:87.72px;font-size:8.9px;color:#303030;font-family:'Liberation Sans';font-weight:normal;transform:scaleX(0.9459);">Dictate</div>
<div class="a" style="left:1058.60px;top:115.05px;font-size:8.5px;color:#4a4a4a;font-family:'Liberation Sans';font-weight:normal;transform:scaleX(0.8849);">Voice</div>
<div class="a" style="left:1095.90px;top:87.79px;font-size:8.7px;color:#bdbdbd;font-family:'Liberation Sans';font-weight:normal;transform:scaleX(0.9422);">Sensitivity</div>
<div class="a" style="left:1096.40px;top:115.05px;font-size:8.5px;color:#4a4a4a;font-family:'Liberation Sans';font-weight:normal;transform:scaleX(0.9383);">Sensitivity</div>
<div class="a" style="left:1147.90px;top:86.62px;font-size:8.9px;color:#303030;font-family:'Liberation Sans';font-weight:normal;transform:scaleX(0.9875);">Add-ins</div>
<div class="a" style="left:1148.75px;top:115.25px;font-size:8.5px;color:#4a4a4a;font-family:'Liberation Sans';font-weight:normal;transform:scaleX(0.9872);">Add-ins</div>
<div class="a" style="left:1194.70px;top:86.62px;font-size:8.9px;color:#303030;font-family:'Liberation Sans';font-weight:normal;transform:scaleX(0.9291);">Editor</div>
<div class="a" style="left:1223.70px;top:86.62px;font-size:8.9px;color:#303030;font-family:'Liberation Sans';font-weight:normal;transform:scaleX(0.9854);">Copilot</div>
<div class="a" style="left:837.70px;top:139.66px;font-size:10.5px;color:#333;font-family:'Liberation Sans';font-weight:normal;transform:scaleX(0.9760);-webkit-text-stroke:0.35px currentColor">CoCounsel</div>
<div class="a" style="left:874.70px;top:169.17px;font-size:10.2px;color:#2c2c2c;font-family:'Liberation Sans';font-weight:bold;transform:scaleX(1.0022);">Home</div>
<div class="a" style="left:916.50px;top:169.17px;font-size:10.2px;color:#2c2c2c;font-family:'Liberation Sans';font-weight:bold;transform:scaleX(0.9802);">Live draft</div>
<div class="a" style="left:974.60px;top:169.17px;font-size:10.2px;color:#2c2c2c;font-family:'Liberation Sans';font-weight:bold;transform:scaleX(0.9750);">Chat</div>
<div class="a" style="left:866.80px;top:203.58px;font-size:14.2px;color:#262626;font-family:'Liberation Sans';font-weight:normal;transform:scaleX(1.0296);-webkit-text-stroke:0.45px currentColor">Start here</div>
<div class="a" style="left:858.70px;top:233.90px;font-size:10.4px;color:#222;font-family:'Liberation Sans';font-weight:bold;transform:scaleX(0.9501);">Ask legal questions</div>
<div class="a" style="left:858.70px;top:247.97px;font-size:9.6px;color:#6b6b6b;font-family:'Liberation Sans';font-weight:normal;transform:scaleX(0.9499);">Get answers for legal research from Westlaw and Practical Law.</div>
<div class="a" style="left:850.40px;top:278.66px;font-size:10.5px;color:#222;font-family:'Liberation Sans';font-weight:bold;transform:scaleX(1.0335);">Find content</div>
<div class="a" style="left:850.40px;top:296.90px;font-size:9.8px;color:#3b87cf;font-family:'Liberation Sans';font-weight:normal;transform:scaleX(1.0828);">Find documents</div>
<div class="a" style="left:943.60px;top:296.90px;font-size:9.8px;color:#3b87cf;font-family:'Liberation Sans';font-weight:normal;transform:scaleX(1.0891);">Find templates</div>
<div class="a" style="left:1030.80px;top:296.90px;font-size:9.8px;color:#3b87cf;font-family:'Liberation Sans';font-weight:normal;transform:scaleX(1.0524);">Find clauses</div>
<div class="a" style="left:866.90px;top:328.38px;font-size:14.2px;color:#262626;font-family:'Liberation Sans';font-weight:normal;transform:scaleX(1.0683);-webkit-text-stroke:0.45px currentColor">Draft content</div>
<div class="a" style="left:858.70px;top:358.80px;font-size:10.4px;color:#222;font-family:'Liberation Sans';font-weight:bold;transform:scaleX(0.9857);">Update contract terms</div>
<div class="a" style="left:858.70px;top:372.87px;font-size:9.6px;color:#6b6b6b;font-family:'Liberation Sans';font-weight:normal;transform:scaleX(0.9606);">Create a contract from a precedent agreement and term sheet.</div>
<div class="a" style="left:858.70px;top:410.00px;font-size:10.4px;color:#222;font-family:'Liberation Sans';font-weight:bold;transform:scaleX(0.9669);">Draft correspondence</div>
<div class="a" style="left:858.70px;top:424.07px;font-size:9.6px;color:#6b6b6b;font-family:'Liberation Sans';font-weight:normal;transform:scaleX(0.9700);">Draft correspondence and non-legal documents.</div>
<div class="a" style="left:850.00px;top:453.96px;font-size:10.5px;color:#222;font-family:'Liberation Sans';font-weight:bold;transform:scaleX(1.0463);">Draft clauses</div>
<div class="a" style="left:849.90px;top:472.20px;font-size:9.8px;color:#3b87cf;font-family:'Liberation Sans';font-weight:normal;transform:scaleX(1.0519);">Draft a clause</div>
<div class="a" style="left:930.40px;top:472.20px;font-size:9.8px;color:#3b87cf;font-family:'Liberation Sans';font-weight:normal;transform:scaleX(1.0619);">Modify a clause</div>
<div class="a" style="left:866.90px;top:503.38px;font-size:14.2px;color:#262626;font-family:'Liberation Sans';font-weight:normal;transform:scaleX(1.0093);-webkit-text-stroke:0.45px currentColor">Review your work</div>
<div class="a" style="left:858.70px;top:533.60px;font-size:10.4px;color:#222;font-family:'Liberation Sans';font-weight:bold;transform:scaleX(0.9767);">Compare to playbooks</div>
<div class="a" style="left:858.70px;top:547.67px;font-size:9.6px;color:#6b6b6b;font-family:'Liberation Sans';font-weight:normal;transform:scaleX(0.9658);">Redline your contracts with a Practical Law or custom playbook.</div>
<div class="a" style="left:858.70px;top:584.80px;font-size:10.4px;color:#222;font-family:'Liberation Sans';font-weight:bold;transform:scaleX(0.9577);">Check for errors</div>
<div class="a" style="left:858.70px;top:598.87px;font-size:9.6px;color:#6b6b6b;font-family:'Liberation Sans';font-weight:normal;transform:scaleX(0.9678);">Analyze your document for common drafting errors with Deal Proof.</div>
<div class="a" style="left:858.70px;top:635.40px;font-size:10.4px;color:#222;font-family:'Liberation Sans';font-weight:bold;transform:scaleX(0.9768);">Review citations</div>
<div class="a" style="left:858.70px;top:649.47px;font-size:9.6px;color:#6b6b6b;font-family:'Liberation Sans';font-weight:normal;transform:scaleX(0.9486);">Check legal status and view in Westlaw.</div>
<div class="a" style="left:-2.00px;top:718.45px;font-size:8.8px;color:#505050;font-family:'Liberation Sans';font-weight:normal;transform:scaleX(0.8175);">of 12</div>
<div class="a" style="left:28.00px;top:718.45px;font-size:8.8px;color:#505050;font-family:'Liberation Sans';font-weight:normal;transform:scaleX(0.9232);">4287 words</div>
<div class="a" style="left:105.00px;top:718.45px;font-size:8.8px;color:#505050;font-family:'Liberation Sans';font-weight:normal;transform:scaleX(0.9222);">English (United States)</div>
<div class="a" style="left:201.00px;top:718.45px;font-size:8.8px;color:#505050;font-family:'Liberation Sans';font-weight:normal;transform:scaleX(0.9270);">Text Predictions: On</div>
<div class="a" style="left:298.00px;top:718.45px;font-size:8.8px;color:#505050;font-family:'Liberation Sans';font-weight:normal;transform:scaleX(0.9340);">Accessibility: Good to go</div>
<div class="a" style="left:994.70px;top:718.45px;font-size:8.8px;color:#505050;font-family:'Liberation Sans';font-weight:normal;transform:scaleX(0.9161);">Display Settings</div>
<div class="a" style="left:1076.00px;top:718.45px;font-size:8.8px;color:#505050;font-family:'Liberation Sans';font-weight:normal;transform:scaleX(0.9097);">Focus</div>
</body></html>
